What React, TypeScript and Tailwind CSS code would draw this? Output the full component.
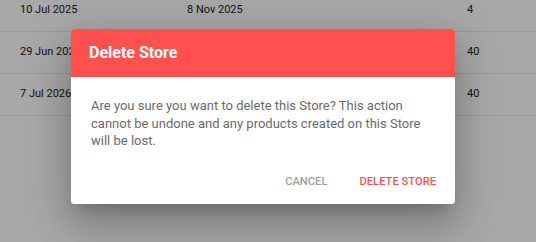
const rows = [
  { created: '10 Jul 2025', updated: '8 Nov 2025', count: '4' },
  { created: '29 Jun 2025', updated: '2 Oct 2025', count: '40' },
  { created: '7 Jul 2026', updated: '14 Jan 2026', count: '40' },
]

function StoreTable() {
  return (
    <div className="-mt-[10px] flex flex-col bg-white">
      {rows.map((r) => (
        <div
          key={r.created}
          className="flex h-[42px] items-center border-b border-[#e8e8e8] text-[11px] text-[#222]"
        >
          <div className="w-[187px] pl-[20px]">{r.created}</div>
          <div className="w-[280px]">{r.updated}</div>
          <div>{r.count}</div>
        </div>
      ))}
    </div>
  )
}

function DeleteDialog() {
  return (
    <div className="w-[384px] overflow-hidden rounded-[3px] bg-white shadow-[0_11px_15px_-7px_rgba(0,0,0,0.2),0_24px_38px_3px_rgba(0,0,0,0.14),0_9px_46px_8px_rgba(0,0,0,0.12)]">
      <div className="flex h-[48px] items-center bg-[#ff5050] pl-[18px]">
        <h2 className="text-[16px] font-bold text-white">Delete Store</h2>
      </div>
      <p className="px-5 pt-5 pb-3 text-[13px] leading-[17.5px] text-[#6b6b6b]">
        Are you sure you want to delete this Store? This action cannot be undone and any
        products created on this Store will be lost.
      </p>
      <div className="flex h-[42px] items-center justify-end gap-[32px] pr-[19px]">
        <button className="text-[11.2px] font-medium uppercase text-[#9e9e9e]">Cancel</button>
        <button className="text-[11.2px] font-medium uppercase text-[#ff5050]">Delete Store</button>
      </div>
    </div>
  )
}

export default function App() {
  return (
    <div className="relative h-[242px] w-[536px] overflow-hidden bg-white font-['Roboto',sans-serif]">
      <StoreTable />
      <div className="absolute inset-0 bg-black/[0.34] pl-[71px] pt-[29px]">
        <DeleteDialog />
      </div>
    </div>
  )
}
